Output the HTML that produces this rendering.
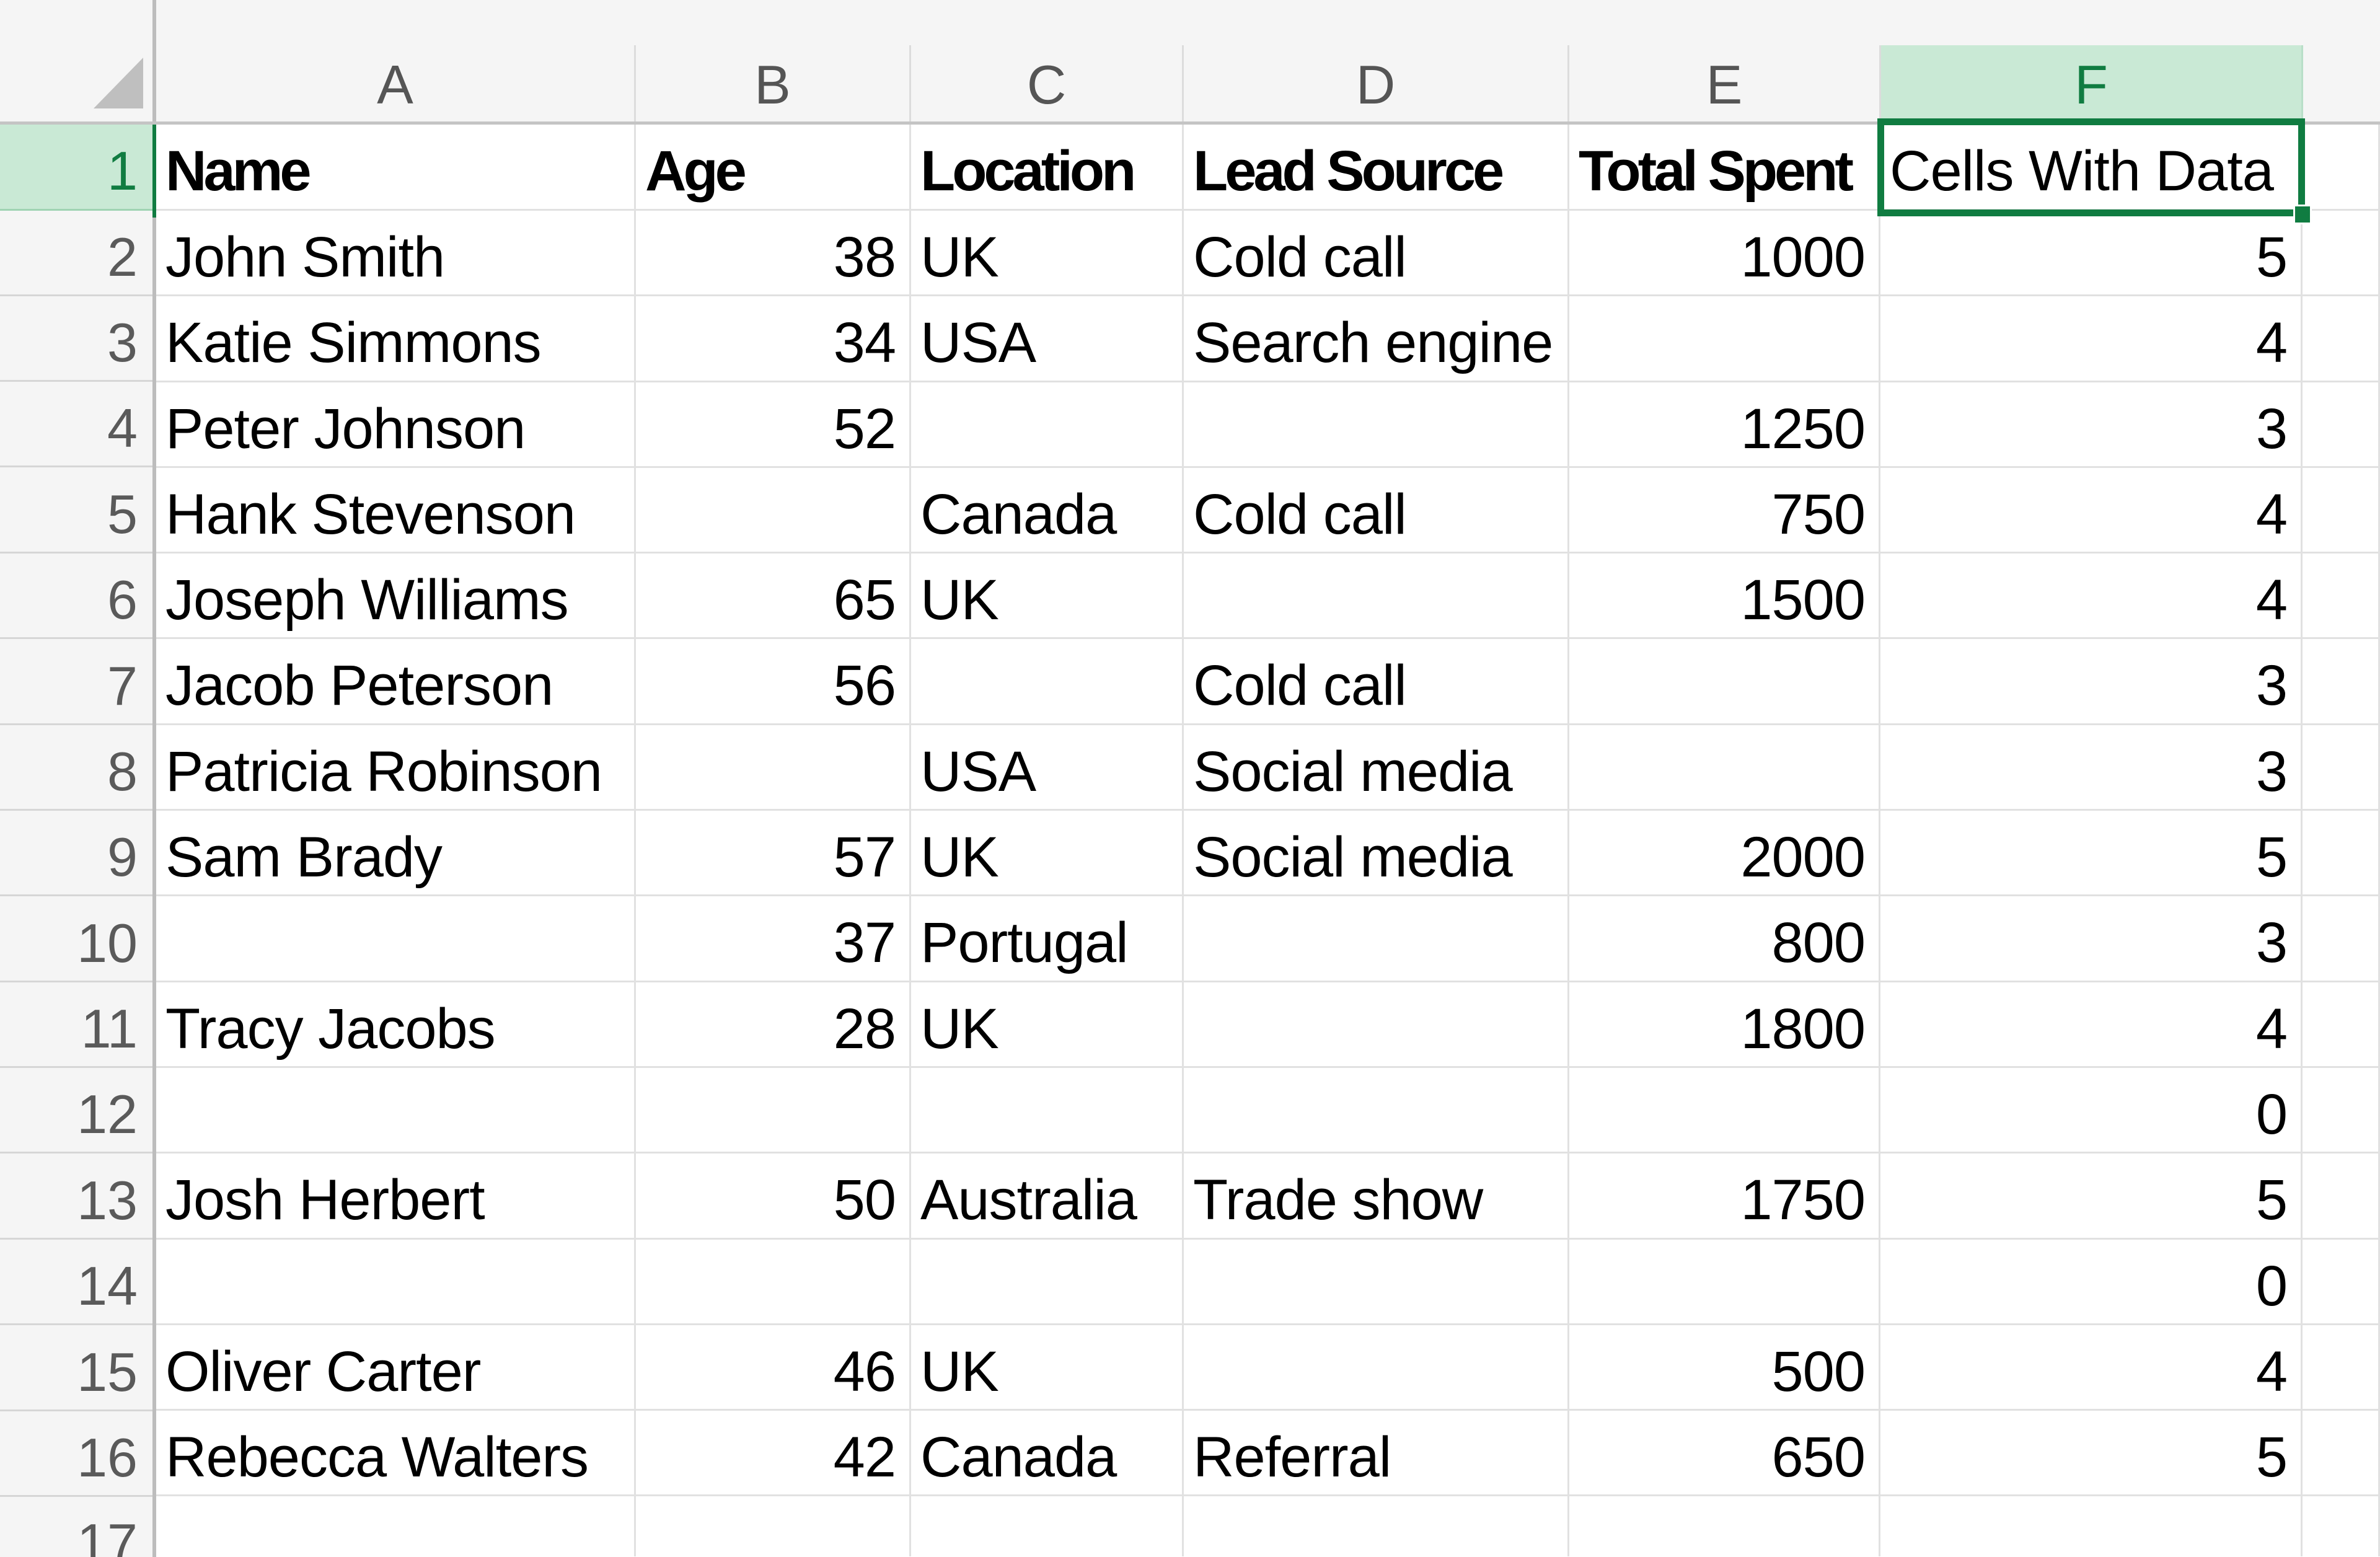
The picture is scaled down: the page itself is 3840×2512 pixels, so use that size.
<!DOCTYPE html>
<html><head><meta charset="utf-8"><style>
html,body{margin:0;padding:0;overflow:hidden;width:3840px;height:2512px}
body{background:#fff;position:relative;font-family:"Liberation Sans",Arial,sans-serif}
#top{position:absolute;left:0;top:0;width:3840px;height:199px;background:#f5f5f5}
#rh{position:absolute;left:0;top:199px;width:250px;height:2313px;background:#f5f5f5}
#vline{position:absolute;left:246px;top:0;width:6px;height:2512px;background:#bdbdbd}
#hline{position:absolute;left:0;top:196px;width:3840px;height:5px;background:#c4c4c4}
#tri{position:absolute;left:0;top:0}
.ch{position:absolute;top:73px;height:124px;border-right:3px solid #dcdcdc;box-sizing:border-box;text-align:center;font-size:88px;color:#555;line-height:124px;padding-top:2px}
.rn{position:absolute;left:0;width:246px;height:138px;box-sizing:border-box;border-bottom:3px solid #d6d6d6;text-align:right;padding-right:24px;font-size:88px;color:#5a5a5a;line-height:138px;padding-top:6px}
#grid{position:absolute;left:252px;top:201px;display:grid;grid-template-columns:774px 444px 440px 622px 502px 681px 125px;grid-template-rows:139px repeat(15,138.3px) 97px;overflow:hidden;height:2311px}
.c{box-sizing:border-box;border-right:3px solid #e1e1e1;border-bottom:3px solid #e1e1e1;font-size:92px;letter-spacing:-1px;color:#000;line-height:138px;padding-top:6px;white-space:nowrap;overflow:visible;padding-left:15px}
.n{text-align:right;padding-right:22px;padding-left:0}
.b{font-weight:bold;letter-spacing:-5px}
</style></head><body>
<div id="top"></div>
<div id="rh"></div>
<div class="ch" style="left:252px;width:774px">A</div>
<div class="ch" style="left:1026px;width:444px">B</div>
<div class="ch" style="left:1470px;width:440px">C</div>
<div class="ch" style="left:1910px;width:622px">D</div>
<div class="ch" style="left:2532px;width:503px">E</div>
<div class="ch" style="left:3035px;width:681px;background:#c9e9d5;color:#107c41;border-right:3px solid #b9dfc8">F</div>
<div class="rn" style="top:201px;height:139px;background:#c9e9d5;color:#107c41;border-bottom-color:#9fd3b3">1</div>
<div class="rn" style="top:340px">2</div>
<div class="rn" style="top:478px">3</div>
<div class="rn" style="top:616px">4</div>
<div class="rn" style="top:755px">5</div>
<div class="rn" style="top:893px">6</div>
<div class="rn" style="top:1032px">7</div>
<div class="rn" style="top:1170px">8</div>
<div class="rn" style="top:1308px">9</div>
<div class="rn" style="top:1447px">10</div>
<div class="rn" style="top:1585px">11</div>
<div class="rn" style="top:1723px">12</div>
<div class="rn" style="top:1862px">13</div>
<div class="rn" style="top:2000px">14</div>
<div class="rn" style="top:2139px">15</div>
<div class="rn" style="top:2277px">16</div>
<div class="rn" style="top:2415px;height:97px;border-bottom:none">17</div>
<div id="vline"></div>
<div id="hline"></div>
<div style="position:absolute;left:246px;top:201px;width:6px;height:150px;background:#107c41"></div>
<svg id="tri" width="252" height="200"><polygon points="231,93 231,175 151,175" fill="#bfbfbf"/></svg>
<div id="grid">
<div class="c b">Name</div><div class="c b">Age</div><div class="c b">Location</div><div class="c b">Lead Source</div><div class="c b">Total Spent</div><div class="c">Cells With Data</div><div class="c"></div>
<div class="c">John Smith</div><div class="c n">38</div><div class="c">UK</div><div class="c">Cold call</div><div class="c n">1000</div><div class="c n">5</div><div class="c"></div>
<div class="c">Katie Simmons</div><div class="c n">34</div><div class="c">USA</div><div class="c">Search engine</div><div class="c n"></div><div class="c n">4</div><div class="c"></div>
<div class="c">Peter Johnson</div><div class="c n">52</div><div class="c"></div><div class="c"></div><div class="c n">1250</div><div class="c n">3</div><div class="c"></div>
<div class="c">Hank Stevenson</div><div class="c n"></div><div class="c">Canada</div><div class="c">Cold call</div><div class="c n">750</div><div class="c n">4</div><div class="c"></div>
<div class="c">Joseph Williams</div><div class="c n">65</div><div class="c">UK</div><div class="c"></div><div class="c n">1500</div><div class="c n">4</div><div class="c"></div>
<div class="c">Jacob Peterson</div><div class="c n">56</div><div class="c"></div><div class="c">Cold call</div><div class="c n"></div><div class="c n">3</div><div class="c"></div>
<div class="c">Patricia Robinson</div><div class="c n"></div><div class="c">USA</div><div class="c">Social media</div><div class="c n"></div><div class="c n">3</div><div class="c"></div>
<div class="c">Sam Brady</div><div class="c n">57</div><div class="c">UK</div><div class="c">Social media</div><div class="c n">2000</div><div class="c n">5</div><div class="c"></div>
<div class="c"></div><div class="c n">37</div><div class="c">Portugal</div><div class="c"></div><div class="c n">800</div><div class="c n">3</div><div class="c"></div>
<div class="c">Tracy Jacobs</div><div class="c n">28</div><div class="c">UK</div><div class="c"></div><div class="c n">1800</div><div class="c n">4</div><div class="c"></div>
<div class="c"></div><div class="c n"></div><div class="c"></div><div class="c"></div><div class="c n"></div><div class="c n">0</div><div class="c"></div>
<div class="c">Josh Herbert</div><div class="c n">50</div><div class="c">Australia</div><div class="c">Trade show</div><div class="c n">1750</div><div class="c n">5</div><div class="c"></div>
<div class="c"></div><div class="c n"></div><div class="c"></div><div class="c"></div><div class="c n"></div><div class="c n">0</div><div class="c"></div>
<div class="c">Oliver Carter</div><div class="c n">46</div><div class="c">UK</div><div class="c"></div><div class="c n">500</div><div class="c n">4</div><div class="c"></div>
<div class="c">Rebecca Walters</div><div class="c n">42</div><div class="c">Canada</div><div class="c">Referral</div><div class="c n">650</div><div class="c n">5</div><div class="c"></div>
<div class="c" style="border-bottom:none"></div><div class="c n" style="border-bottom:none"></div><div class="c" style="border-bottom:none"></div><div class="c" style="border-bottom:none"></div><div class="c n" style="border-bottom:none"></div><div class="c n" style="border-bottom:none"></div><div class="c" style="border-bottom:none"></div>
</div>
<div style="position:absolute;left:3029px;top:191px;width:690px;height:158px;box-sizing:border-box;border:11px solid #107c41"></div>
<div style="position:absolute;left:3703px;top:333px;width:24px;height:26px;background:#107c41;outline:3px solid #fff"></div>
</body></html>
